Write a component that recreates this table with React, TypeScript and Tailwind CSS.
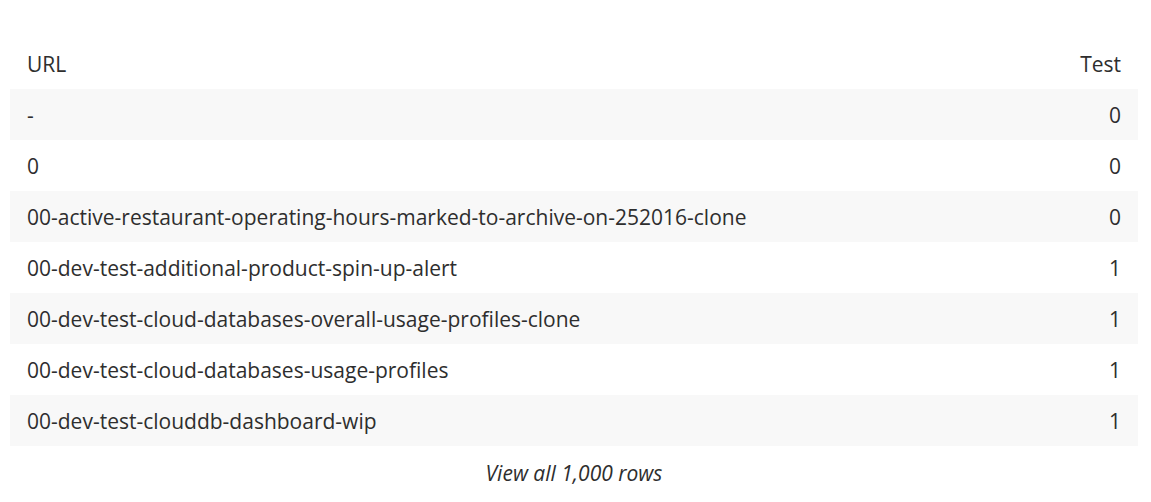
const rows: [string, number][] = [
  ['-', 0],
  ['0', 0],
  ['00-active-restaurant-operating-hours-marked-to-archive-on-252016-clone', 0],
  ['00-dev-test-additional-product-spin-up-alert', 1],
  ['00-dev-test-cloud-databases-overall-usage-profiles-clone', 1],
  ['00-dev-test-cloud-databases-usage-profiles', 1],
  ['00-dev-test-clouddb-dashboard-wip', 1],
]

export default function App() {
  return (
    <div className="bg-white w-[1151px] h-[502px] pl-[10px] pr-[13px] pt-[38px] text-[#2e2e2e] font-['Open_Sans',sans-serif] font-normal text-[21px]">
      <div className="flex items-center justify-between h-[51px] pt-[2px] pl-[17px] pr-[17px]">
        <span>URL</span>
        <span>Test</span>
      </div>
      {rows.map(([url, n], i) => (
        <div
          key={url}
          className={
            'flex items-center justify-between h-[51px] pt-[2px] pl-[17px] pr-[17px] ' +
            (i % 2 === 0 ? 'bg-[#f8f8f8]' : 'bg-white')
          }
        >
          <span>{url}</span>
          <span>{n}</span>
        </div>
      ))}
      <div className="flex justify-center pt-[12px] italic">View all 1,000 rows</div>
    </div>
  )
}
